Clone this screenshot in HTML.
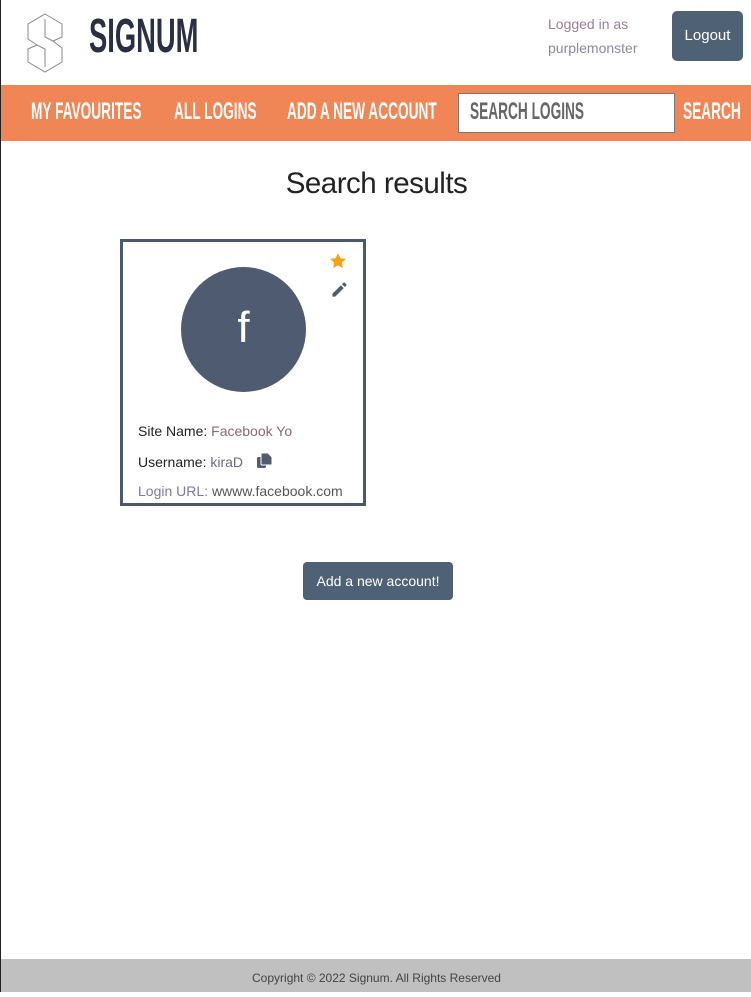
<!DOCTYPE html><html><head><style>
body{margin:0;width:751px;height:992px;position:relative;font-family:"Liberation Sans",sans-serif;background:#fff;overflow:hidden;border-left:1px solid #222;box-sizing:border-box}
.cond{font-family:"Liberation Sans",sans-serif;font-weight:bold;display:inline-block;transform-origin:left top;white-space:nowrap}
.nav{position:absolute;top:85px;left:0;width:751px;height:56px;background:#f08555}
.nav span{position:absolute;top:13px;color:#fff;font-size:24px;transform:scaleX(.57)}
</style></head><body>
<svg style="position:absolute;left:26px;top:13px" width="36" height="60" viewBox="0 0 36 60" fill="none" stroke="#888" stroke-width="1"><path d="M18 1 L35 11 L35 24 L26 28 L35 35 L35 49 L18 59 L1 49 L1 36 L10 32 L1 26 L1 11 Z"/><path d="M18 6 L18 24 L26 28 M10 32 L18 36 L18 54"/></svg>
<div class="cond" style="position:absolute;left:88px;top:9px;font-size:48px;color:#2b2f44;transform:scaleX(.57)">SIGNUM</div>
<div style="position:absolute;left:547px;top:12px;font-size:14px;line-height:24px;color:#a07080"><span style="color:#9a7f94">Logged in as</span><br><span style="color:#8a8aa0">purplemonster</span></div>
<div style="position:absolute;left:671px;top:11px;width:71px;height:50px;background:#4f6174;border-radius:5px;color:#fff;font-size:15px;line-height:50px;text-align:center">Logout</div>
<div class="nav">
<span class="cond" style="left:30px">MY FAVOURITES</span>
<span class="cond" style="left:173px">ALL LOGINS</span>
<span class="cond" style="left:286px">ADD A NEW ACCOUNT</span>
<div style="position:absolute;left:457px;top:8px;width:215px;height:38px;background:#fff;border:1px solid #777"></div>
<span class="cond" style="left:469px;color:#666">SEARCH LOGINS</span>
<span class="cond" style="left:682px">SEARCH</span>
</div>
<div style="position:absolute;top:167px;width:751px;text-align:center;font-size:29.5px;color:#222;letter-spacing:-0.5px">Search results</div>
<div style="position:absolute;left:119px;top:239px;width:240px;height:261px;border:3px solid #4b5870"></div>
<div style="position:absolute;left:180px;top:267px;width:125px;height:125px;border-radius:50%;background:#4e5b71;color:#fff;font-size:44px;font-weight:300;text-align:center;line-height:122px">f</div>
<svg style="position:absolute;left:328px;top:252px" width="18" height="18" viewBox="0 0 24 24"><path fill="#f7a11a" d="M12 1.5l3.2 6.8 7.3.9-5.4 5 1.4 7.3L12 17.9l-6.5 3.6 1.4-7.3-5.4-5 7.3-.9z"/></svg>
<svg style="position:absolute;left:330px;top:281px" width="17" height="17" viewBox="0 0 24 24"><path fill="#4e5b71" d="M2 18v4h4L18 10l-4-4zM15.5 4.5l4 4 2-2a1.4 1.4 0 000-2l-2-2a1.4 1.4 0 00-2 0z"/></svg>
<div style="position:absolute;left:137px;top:421px;font-size:14px;color:#222;line-height:20px">Site Name: <span style="color:#8a6a70">Facebook Yo</span></div>
<div style="position:absolute;left:137px;top:452px;font-size:14px;color:#222;line-height:20px">Username: <span style="color:#6a6a88">kiraD</span></div>
<svg style="position:absolute;left:255px;top:452px" width="17" height="17" viewBox="0 0 17 17"><rect x="1" y="5" width="9" height="11" rx="1.5" fill="#4e5b71"/><path d="M6 1h6l4 4v7a1 1 0 01-1 1H6a1 1 0 01-1-1V2a1 1 0 011-1z" fill="#4e5b71" stroke="#fff" stroke-width="1"/></svg>
<div style="position:absolute;left:137px;top:481px;font-size:14px;color:#7a7aa0;line-height:20px">Login URL: <span style="color:#555">wwww.facebook.com</span></div>
<div style="position:absolute;left:302px;top:562px;width:150px;height:38px;background:#4f6174;border-radius:4px;color:#fff;font-size:14px;line-height:38px;text-align:center">Add a new account!</div>
<div style="position:absolute;left:0;top:959px;width:751px;height:33px;background:#c0c0c0;text-align:center;font-size:12px;line-height:38px;color:#444">Copyright © 2022 Signum. All Rights Reserved</div>
</body></html>
